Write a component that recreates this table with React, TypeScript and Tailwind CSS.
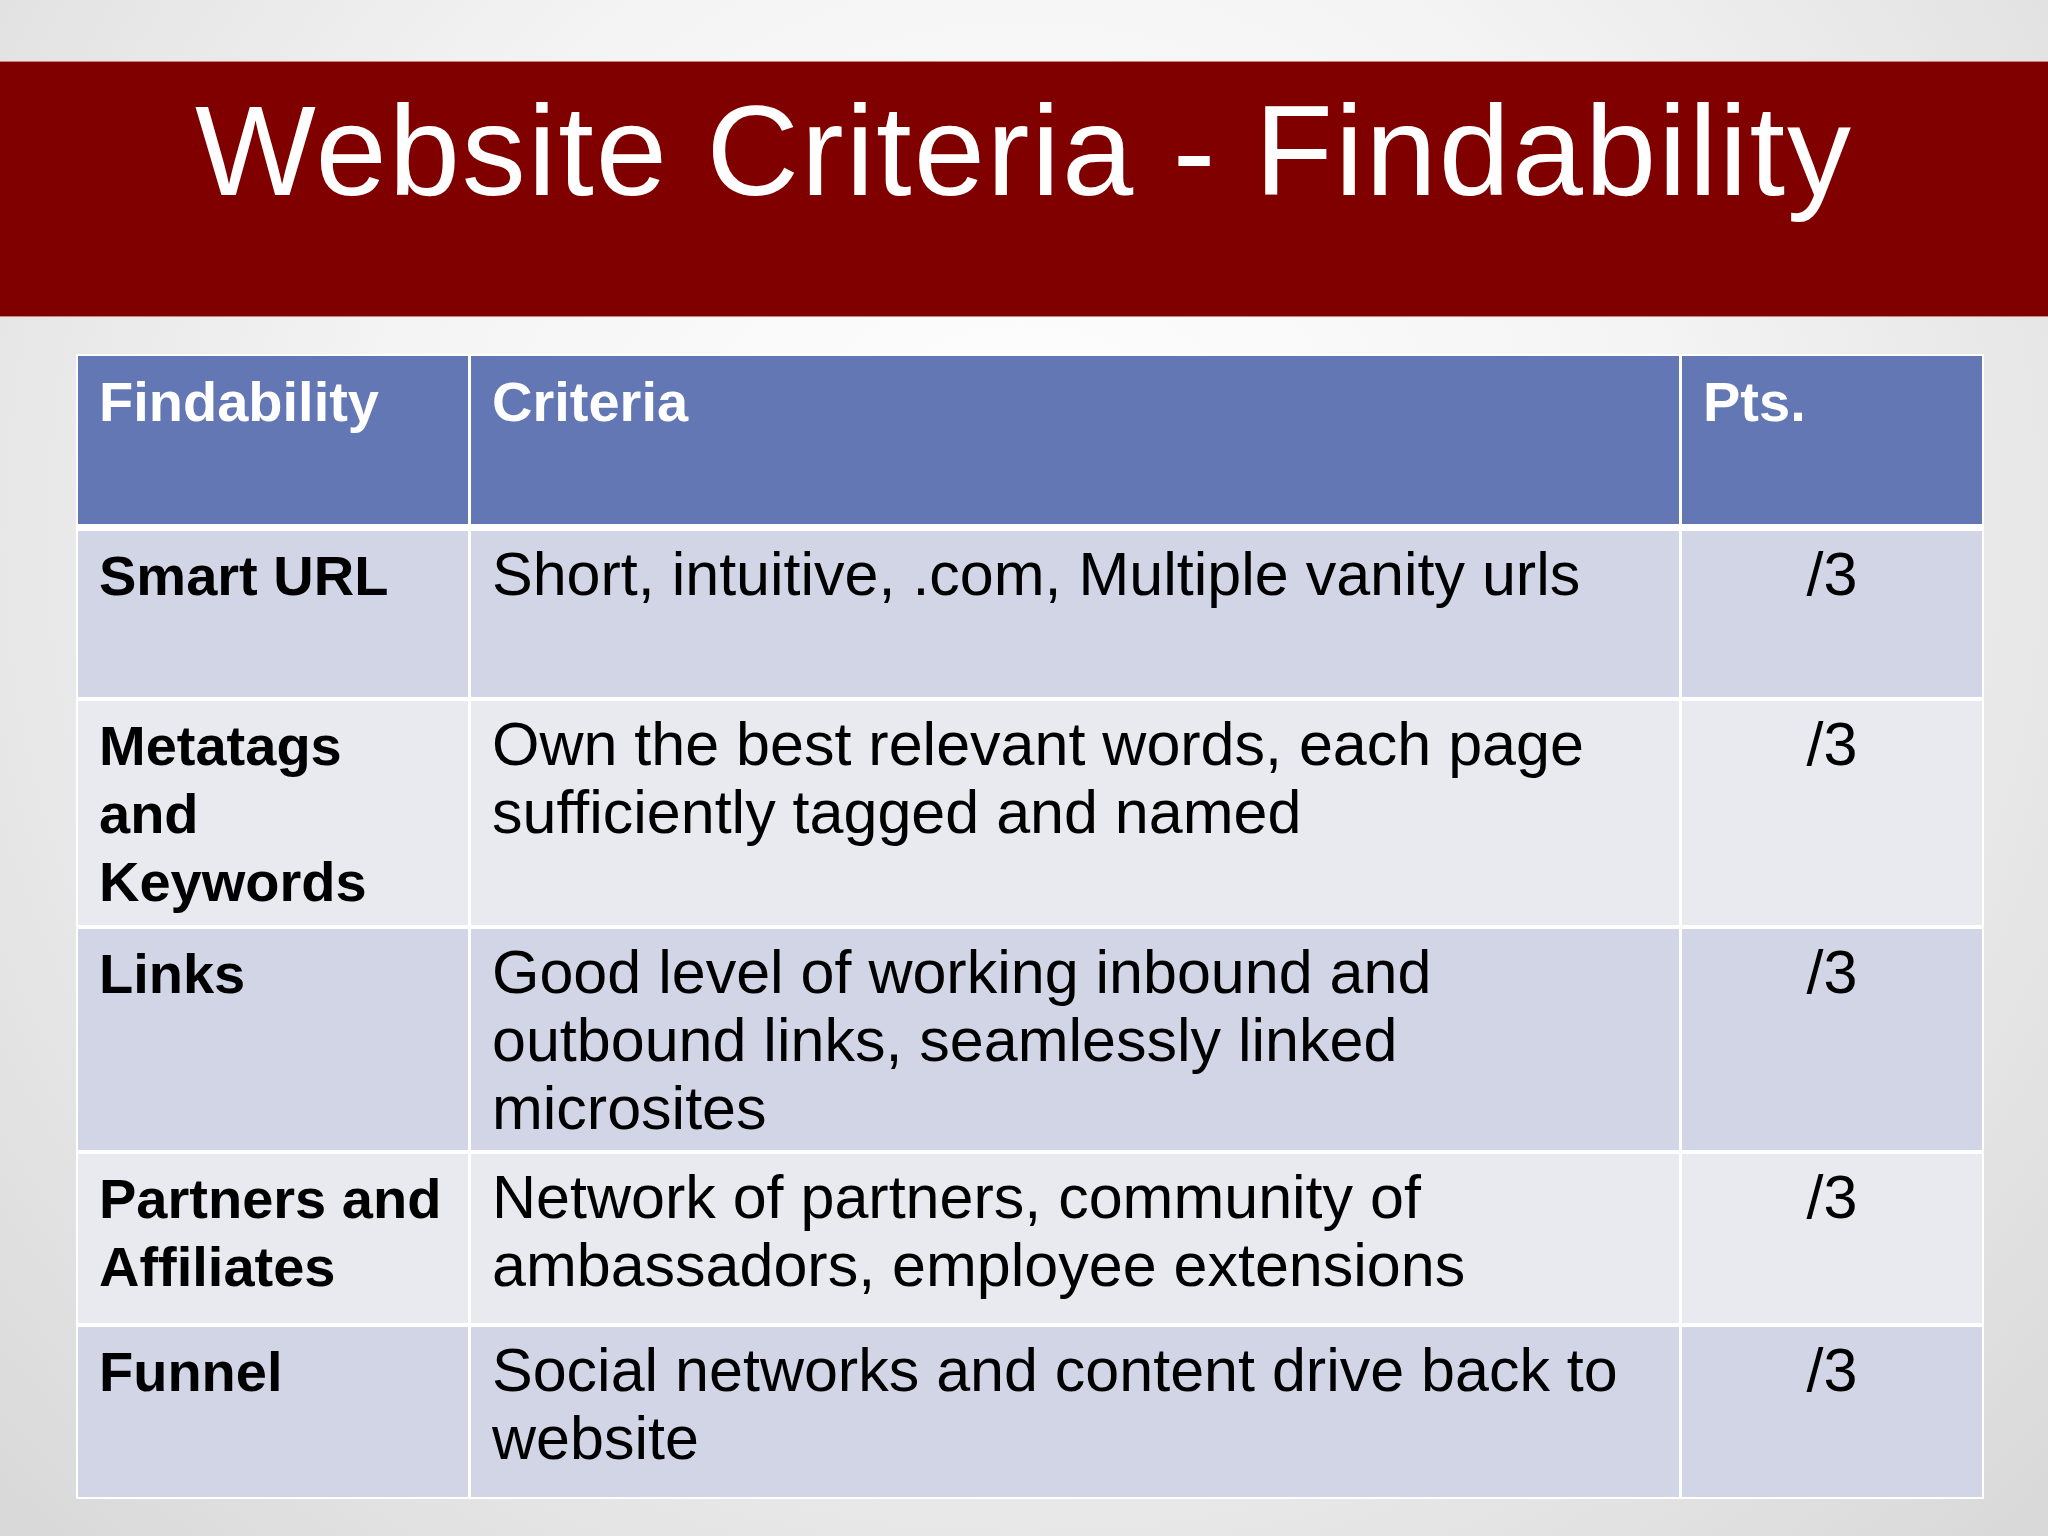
import React from "react";

type Row = {
  name: string[];
  criteria: string[];
  pts: string;
  h: string;
  bg: string;
};

const rows: Row[] = [
  {
    name: ["Smart URL"],
    criteria: ["Short, intuitive, .com, Multiple vanity urls"],
    pts: "/3",
    h: "h-[166px]",
    bg: "bg-[#d1d5e6]",
  },
  {
    name: ["Metatags", "and", "Keywords"],
    criteria: ["Own the best relevant words, each page", "sufficiently tagged and named"],
    pts: "/3",
    h: "h-[224px]",
    bg: "bg-[#e9e9f0]",
  },
  {
    name: ["Links"],
    criteria: ["Good level of working inbound and", "outbound links, seamlessly linked", "microsites"],
    pts: "/3",
    h: "h-[221px]",
    bg: "bg-[#d1d5e6]",
  },
  {
    name: ["Partners and", "Affiliates"],
    criteria: ["Network of partners, community of", "ambassadors, employee extensions"],
    pts: "/3",
    h: "h-[169px]",
    bg: "bg-[#e9e9f0]",
  },
  {
    name: ["Funnel"],
    criteria: ["Social networks and content drive back to", "website"],
    pts: "/3",
    h: "h-[170px]",
    bg: "bg-[#d1d5e6]",
  },
];

function Lines({ lines }: { lines: string[] }) {
  return (
    <>
      {lines.map((l, i) => (
        <div key={i} className="whitespace-nowrap">
          {l}
        </div>
      ))}
    </>
  );
}

export default function App() {
  return (
    <div
      className="w-[2048px] h-[1536px] overflow-hidden flex flex-col bg-[radial-gradient(ellipse_at_50%_35%,#ffffff_0%,#f4f4f4_45%,#d8d8d8_100%)]"
      style={{ fontFamily: '"Liberation Sans", Arial, sans-serif' }}
    >
      <div className="h-[61px] shrink-0" />
      <div className="h-[256px] shrink-0 bg-[#800000] border-t border-b border-[#c98080] pt-[25px]">
        <h1 className="text-center text-white text-[128px] leading-[128px] font-normal tracking-[2px] whitespace-nowrap">
          Website Criteria - Findability
        </h1>
      </div>

      <div className="mt-[37px] ml-[76px] w-[1908px] bg-white p-[2px] flex flex-col gap-[4px]">
        <div className="grid grid-cols-[390px_1208px_300px] gap-x-[3px] h-[168px] mb-[3px]">
          <div className="bg-[#6277b3] pl-[21px] pt-[12px] text-white font-bold text-[56px] leading-[68px]">
            Findability
          </div>
          <div className="bg-[#6277b3] pl-[21px] pt-[12px] text-white font-bold text-[56px] leading-[68px]">
            Criteria
          </div>
          <div className="bg-[#6277b3] pl-[21px] pt-[12px] text-white font-bold text-[56px] leading-[68px]">
            Pts.
          </div>
        </div>

        {rows.map((r, i) => (
          <div key={i} className={`grid grid-cols-[390px_1208px_300px] gap-x-[3px] ${r.h}`}>
            <div className={`${r.bg} pl-[21px] pt-[11px] text-black font-bold text-[56px] leading-[68px]`}>
              <Lines lines={r.name} />
            </div>
            <div className={`${r.bg} pl-[21px] pt-[9px] text-black text-[61px] leading-[68px]`}>
              <Lines lines={r.criteria} />
            </div>
            <div className={`${r.bg} pt-[9px] text-center text-black text-[61px] leading-[68px]`}>
              {r.pts}
            </div>
          </div>
        ))}
      </div>
    </div>
  );
}
